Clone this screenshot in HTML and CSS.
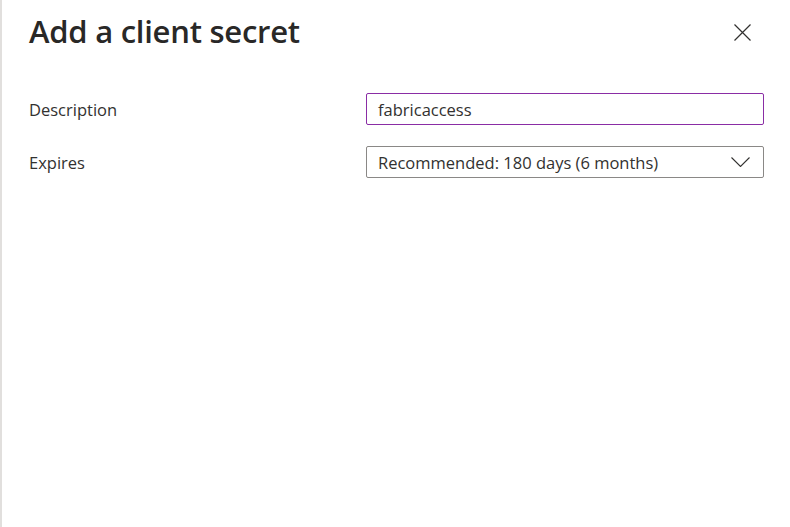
FILE: index.html
```html
<!DOCTYPE html>
<html lang="en">
<head>
<meta charset="utf-8">
<title>Add a client secret</title>
<link rel="stylesheet" href="styles.css">
</head>
<body>
<div class="panel">
  <header class="header">
    <h1 class="title">Add a client secret</h1>
    <button class="close" aria-label="Close">
      <svg width="17" height="17" viewBox="0 0 17 17"><path d="M0.5 0.5 L16.5 16.5 M16.5 0.5 L0.5 16.5" stroke="#323130" stroke-width="1.2" fill="none"/></svg>
    </button>
  </header>
  <div class="form">
    <div class="row">
      <label class="label">Description</label>
      <div class="field focused">fabricaccess</div>
    </div>
    <div class="row">
      <label class="label">Expires</label>
      <div class="field select">
        <span>Recommended: 180 days (6 months)</span>
        <svg class="chev" width="19" height="10" viewBox="0 0 19 10"><path d="M0.5 0.5 L9.5 9.5 L18.5 0.5" stroke="#323130" stroke-width="1.1" fill="none"/></svg>
      </div>
    </div>
  </div>
</div>
</body>
</html>
```
FILE: styles.css
```css
html, body {
  margin: 0;
  padding: 0;
  background: #ffffff;
}
body {
  font-family: "Open Sans", "Noto Sans", sans-serif;
  color: #323130;
}
.panel {
  box-sizing: border-box;
  height: 527px;
  border-left: 2px solid #e1dfdd;
  padding: 0 26px 0 27px;
}
.header {
  display: flex;
  justify-content: space-between;
  align-items: center;
  height: 64px;
}
.title {
  margin: 0;
  font-size: 31px;
  font-weight: 600;
  color: #292827;
  letter-spacing: -0.25px;
  position: relative;
  top: -1px;
}
.close {
  border: 0;
  background: none;
  padding: 0;
  width: 17px;
  height: 17px;
  margin-right: 13px;
  display: flex;
}
.form {
  display: flex;
  flex-direction: column;
  gap: 21px;
  margin-top: 29px;
}
.row {
  display: grid;
  grid-template-columns: 337px 398px;
  align-items: center;
}
.label {
  font-size: 16.5px;
  color: #323130;
}
.field {
  box-sizing: border-box;
  height: 32px;
  border: 1px solid #8a8886;
  border-radius: 2px;
  padding: 0 11px;
  font-size: 16.5px;
  display: flex;
  align-items: center;
  justify-content: space-between;
  color: #323130;
}
.field.focused {
  border-color: #8a2da5;
}
.chev {
  margin-right: 2px;
}
```
